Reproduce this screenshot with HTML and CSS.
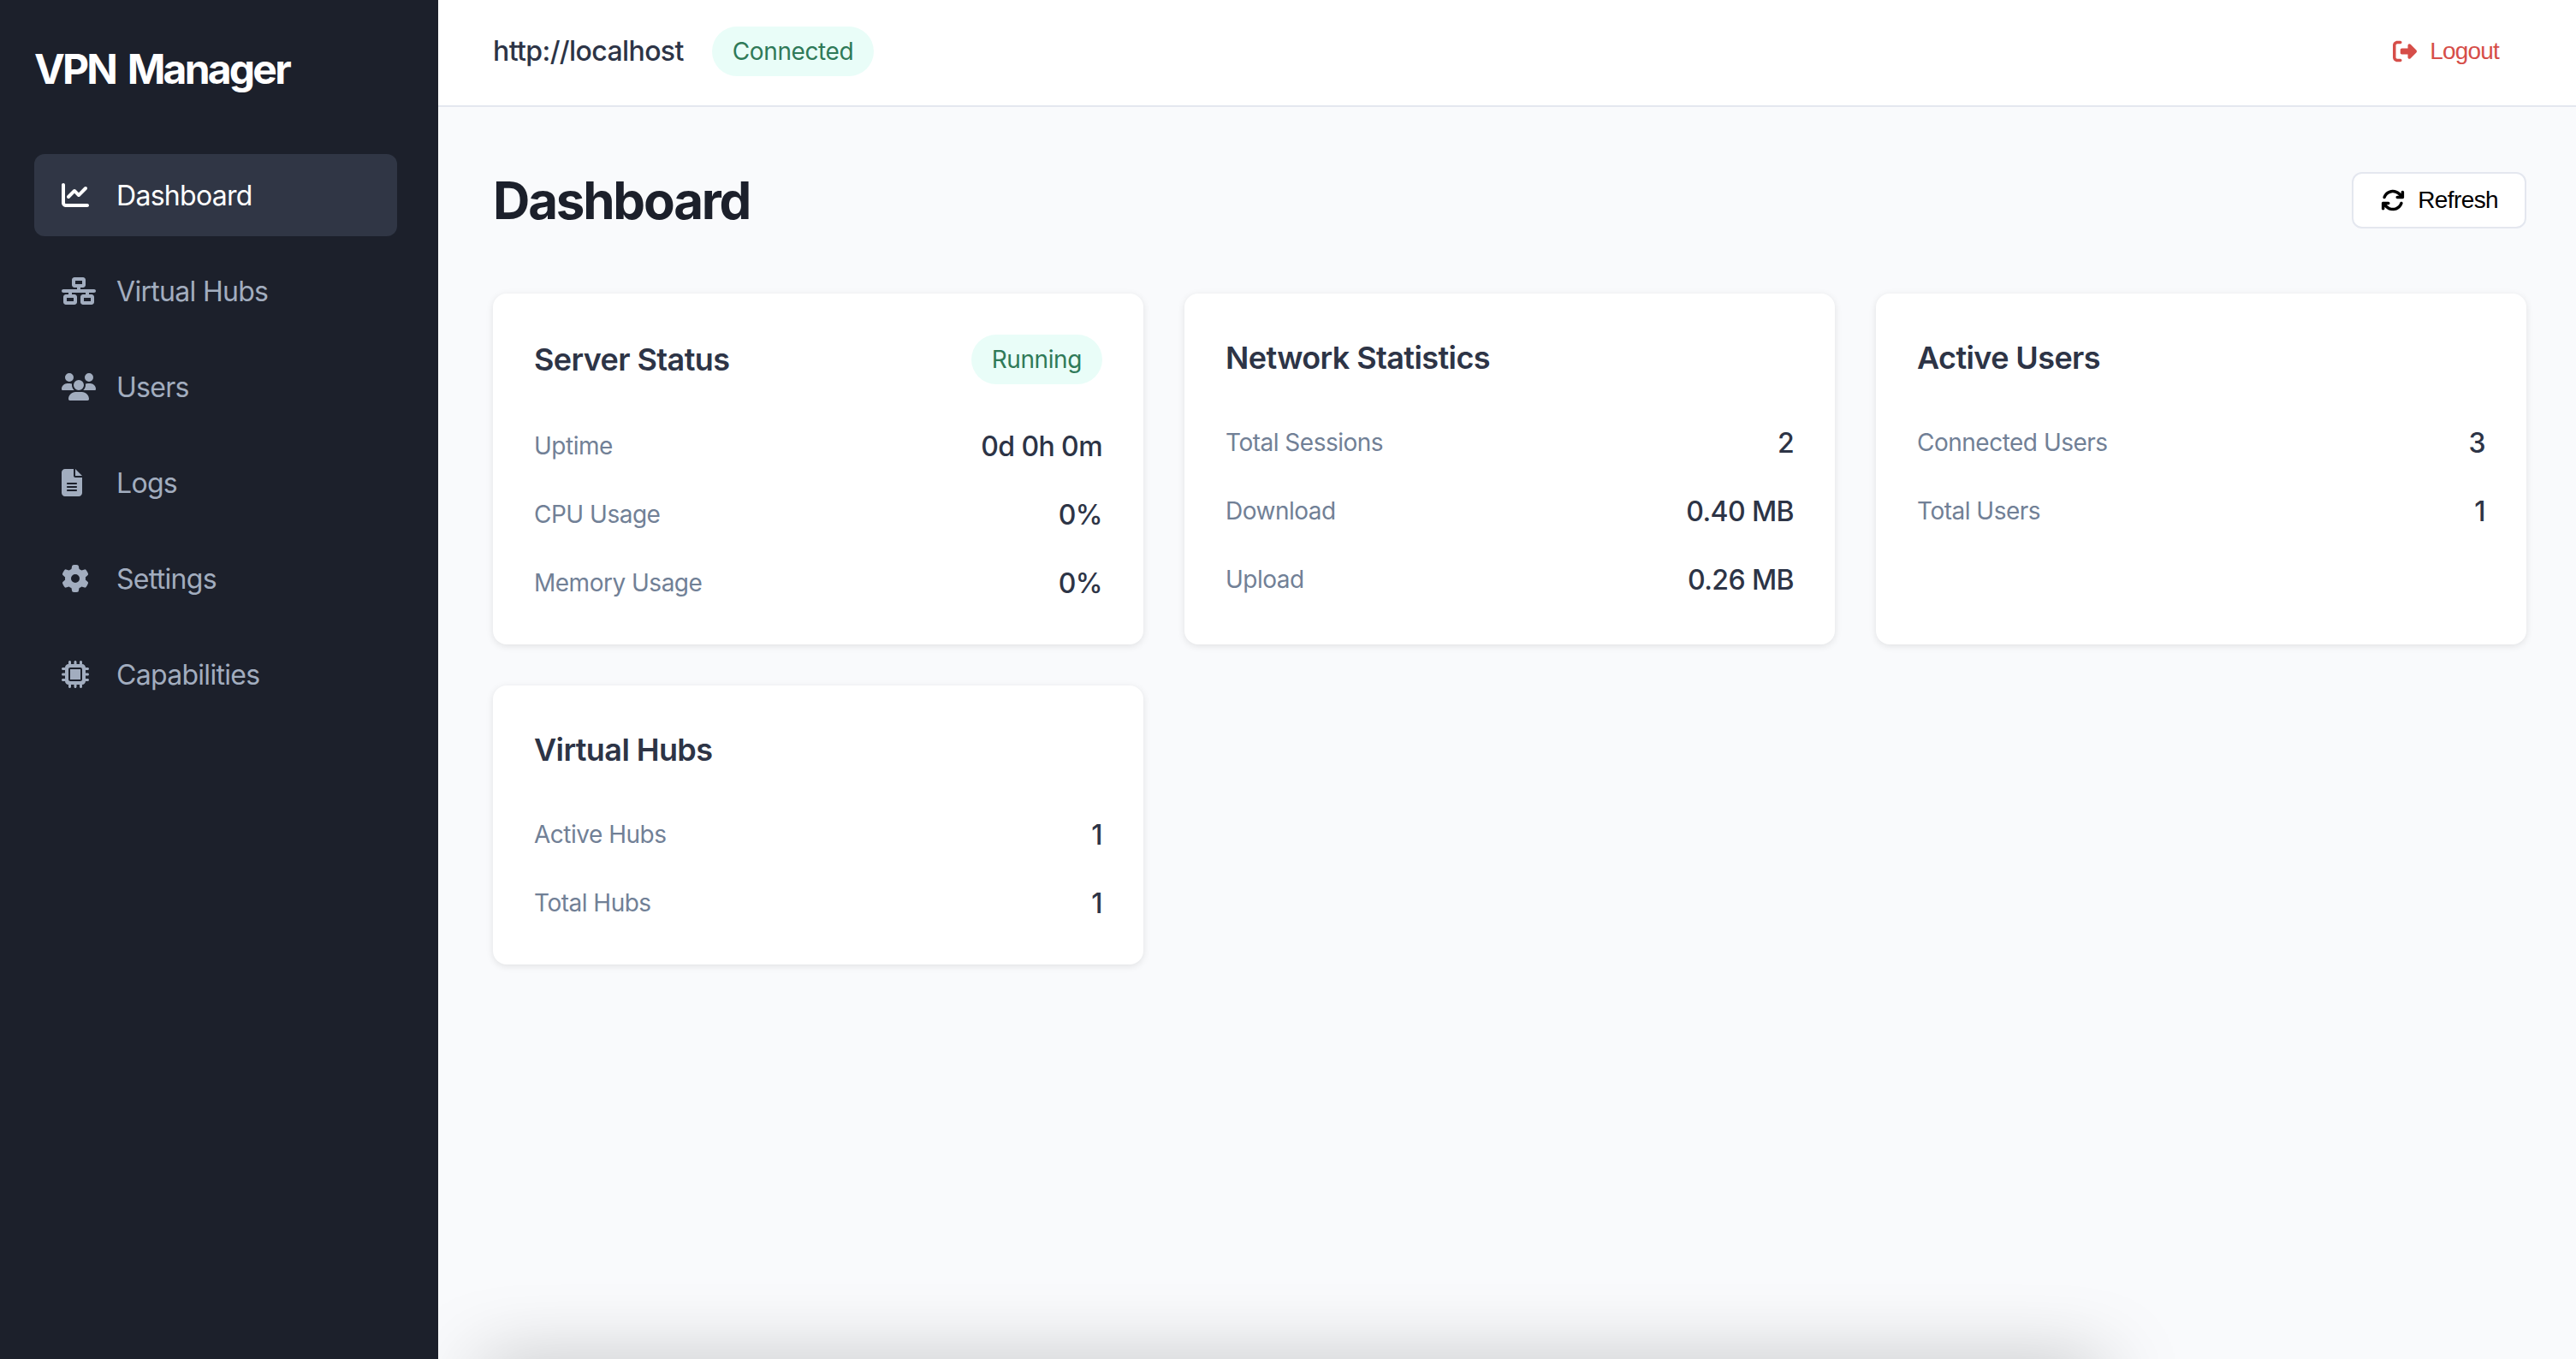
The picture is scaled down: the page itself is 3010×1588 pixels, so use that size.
FILE: index.html
```html
<!DOCTYPE html>
<html lang="en">
<head>
    <meta charset="utf-8">
    <title>VPN Manager</title>
    <link rel="stylesheet" href="styles.css">
</head>
<body>
    <aside class="sidebar">
        <h1 class="logo">VPN Manager</h1>
        <nav class="nav">
            <a class="nav-item active">
                <span class="nav-icon"><svg class="icon" width="32" height="32" viewBox="0 0 512 512"><path d="M64 64c0-17.7-14.3-32-32-32S0 46.3 0 64V400c0 44.2 35.8 80 80 80H480c17.7 0 32-14.3 32-32s-14.3-32-32-32H80c-8.8 0-16-7.2-16-16V64zm406.6 86.6c12.5-12.5 12.5-32.8 0-45.3s-32.8-12.5-45.3 0L320 210.7l-57.4-57.4c-12.5-12.5-32.8-12.5-45.3 0l-112 112c-12.5 12.5-12.5 32.8 0 45.3s32.8 12.5 45.3 0L240 221.3l57.4 57.4c12.5 12.5 32.8 12.5 45.3 0l128-128z"/></svg></span>
                <span class="nav-label">Dashboard</span>
            </a>
            <a class="nav-item">
                <span class="nav-icon"><svg class="icon" width="40" height="32" viewBox="0 0 640 512"><path d="M256 64H384v64H256V64zM240 0c-26.5 0-48 21.5-48 48v96c0 26.5 21.5 48 48 48h48v32H32c-17.7 0-32 14.3-32 32s14.3 32 32 32h96v32H80c-26.5 0-48 21.5-48 48v96c0 26.5 21.5 48 48 48H240c26.5 0 48-21.5 48-48V368c0-26.5-21.5-48-48-48H192V288H448v32H400c-26.5 0-48 21.5-48 48v96c0 26.5 21.5 48 48 48H560c26.5 0 48-21.5 48-48V368c0-26.5-21.5-48-48-48H512V288h96c17.7 0 32-14.3 32-32s-14.3-32-32-32H352V192h48c26.5 0 48-21.5 48-48V48c0-26.5-21.5-48-48-48H240zM96 448V384H224v64H96zm320-64H544v64H416V384z"/></svg></span>
                <span class="nav-label">Virtual Hubs</span>
            </a>
            <a class="nav-item">
                <span class="nav-icon"><svg class="icon" width="40" height="32" viewBox="0 0 640 512"><path d="M144 0a80 80 0 1 1 0 160A80 80 0 1 1 144 0zM512 0a80 80 0 1 1 0 160A80 80 0 1 1 512 0zM0 298.7C0 239.8 47.8 192 106.7 192h42.7c15.9 0 31 3.5 44.6 9.7c-1.3 7.2-1.9 14.7-1.9 22.3c0 38.2 16.8 72.5 43.3 96c-.2 0-.4 0-.7 0H21.3C9.6 320 0 310.4 0 298.7zM405.3 320c-.2 0-.4 0-.7 0c26.6-23.5 43.3-57.8 43.3-96c0-7.6-.7-15-1.9-22.3c13.6-6.3 28.7-9.7 44.6-9.7h42.7C592.2 192 640 239.8 640 298.7c0 11.8-9.6 21.3-21.3 21.3H405.3zM224 224a96 96 0 1 1 192 0 96 96 0 1 1 -192 0zM128 485.3C128 411.7 187.7 352 261.3 352H378.7C452.3 352 512 411.7 512 485.3c0 14.7-11.9 26.7-26.7 26.7H154.7c-14.7 0-26.7-11.9-26.7-26.7z"/></svg></span>
                <span class="nav-label">Users</span>
            </a>
            <a class="nav-item">
                <span class="nav-icon"><svg class="icon" width="24" height="32" viewBox="0 0 384 512"><path d="M64 0C28.7 0 0 28.7 0 64V448c0 35.3 28.7 64 64 64H320c35.3 0 64-28.7 64-64V160H256c-17.7 0-32-14.3-32-32V0H64zM256 0V128H384L256 0zM112 256H272c8.8 0 16 7.2 16 16s-7.2 16-16 16H112c-8.8 0-16-7.2-16-16s7.2-16 16-16zm0 64H272c8.8 0 16 7.2 16 16s-7.2 16-16 16H112c-8.8 0-16-7.2-16-16s7.2-16 16-16zm0 64H272c8.8 0 16 7.2 16 16s-7.2 16-16 16H112c-8.8 0-16-7.2-16-16s7.2-16 16-16z"/></svg></span>
                <span class="nav-label">Logs</span>
            </a>
            <a class="nav-item">
                <span class="nav-icon"><svg class="icon" width="32" height="32" viewBox="0 0 512 512"><path d="M495.9 166.6c3.2 8.7 .5 18.4-6.4 24.6l-43.3 39.4c1.1 8.3 1.7 16.8 1.7 25.4s-.6 17.1-1.7 25.4l43.3 39.4c6.9 6.2 9.6 15.9 6.4 24.6c-4.4 11.9-9.7 23.3-15.8 34.3l-4.7 8.1c-6.6 11-14 21.4-22.1 31.2c-5.9 7.2-15.7 9.6-24.5 6.8l-55.7-17.7c-13.4 10.3-28.2 18.9-44 25.4l-12.5 57.1c-2 9.1-9 16.3-18.2 17.8c-13.8 2.3-28 3.5-42.5 3.5s-28.7-1.2-42.5-3.5c-9.2-1.5-16.2-8.7-18.2-17.8l-12.5-57.1c-15.8-6.5-30.6-15.1-44-25.4L83.1 425.9c-8.8 2.8-18.6 .3-24.5-6.8c-8.1-9.8-15.5-20.2-22.1-31.2l-4.7-8.1c-6.1-11-11.4-22.4-15.8-34.3c-3.2-8.7-.5-18.4 6.4-24.6l43.3-39.4C64.6 273.1 64 264.6 64 256s.6-17.1 1.7-25.4L22.4 191.2c-6.9-6.2-9.6-15.9-6.4-24.6c4.4-11.9 9.7-23.3 15.8-34.3l4.7-8.1c6.6-11 14-21.4 22.1-31.2c5.9-7.2 15.7-9.6 24.5-6.8l55.7 17.7c13.4-10.3 28.2-18.9 44-25.4l12.5-57.1c2-9.1 9-16.3 18.2-17.8C227.3 1.2 241.5 0 256 0s28.7 1.2 42.5 3.5c9.2 1.5 16.2 8.7 18.2 17.8l12.5 57.1c15.8 6.5 30.6 15.1 44 25.4l55.7-17.7c8.8-2.8 18.6-.3 24.5 6.8c8.1 9.8 15.5 20.2 22.1 31.2l4.7 8.1c6.1 11 11.4 22.4 15.8 34.3zM256 336a80 80 0 1 0 0-160 80 80 0 1 0 0 160z"/></svg></span>
                <span class="nav-label">Settings</span>
            </a>
            <a class="nav-item">
                <span class="nav-icon"><svg class="icon" width="32" height="32" viewBox="0 0 512 512"><path d="M176 24c0-13.3-10.7-24-24-24s-24 10.7-24 24V64c-35.3 0-64 28.7-64 64H24c-13.3 0-24 10.7-24 24s10.7 24 24 24H64v56H24c-13.3 0-24 10.7-24 24s10.7 24 24 24H64v56H24c-13.3 0-24 10.7-24 24s10.7 24 24 24H64c0 35.3 28.7 64 64 64v40c0 13.3 10.7 24 24 24s24-10.7 24-24V448h56v40c0 13.3 10.7 24 24 24s24-10.7 24-24V448h56v40c0 13.3 10.7 24 24 24s24-10.7 24-24V448c35.3 0 64-28.7 64-64h40c13.3 0 24-10.7 24-24s-10.7-24-24-24H448V280h40c13.3 0 24-10.7 24-24s-10.7-24-24-24H448V176h40c13.3 0 24-10.7 24-24s-10.7-24-24-24H448c0-35.3-28.7-64-64-64V24c0-13.3-10.7-24-24-24s-24 10.7-24 24V64H280V24c0-13.3-10.7-24-24-24s-24 10.7-24 24V64H176V24zM160 128H352c17.7 0 32 14.3 32 32V352c0 17.7-14.3 32-32 32H160c-17.7 0-32-14.3-32-32V160c0-17.7 14.3-32 32-32zm192 32H160V352H352V160z"/></svg></span>
                <span class="nav-label">Capabilities</span>
            </a>
        </nav>
    </aside>

    <div class="page">
        <header class="topbar">
            <div class="server">
                <span class="server-url">http://localhost</span>
                <span class="badge">Connected</span>
            </div>
            <button class="logout">
                <svg class="icon" width="28" height="28" viewBox="0 0 512 512"><path d="M377.9 105.9L500.7 228.7c7.2 7.2 11.3 17.1 11.3 27.3s-4.1 20.1-11.3 27.3L377.9 406.1c-6.4 6.4-15 9.9-24 9.9c-18.7 0-33.9-15.2-33.9-33.9l0-62.1-128 0c-17.7 0-32-14.3-32-32l0-64c0-17.7 14.3-32 32-32l128 0 0-62.1c0-18.7 15.2-33.9 33.9-33.9c9 0 17.6 3.6 24 9.9zM160 96L96 96c-17.7 0-32 14.3-32 32l0 256c0 17.7 14.3 32 32 32l64 0c17.7 0 32 14.3 32 32s-14.3 32-32 32l-64 0c-53 0-96-43-96-96L0 128C0 75 43 32 96 32l64 0c17.7 0 32 14.3 32 32s-14.3 32-32 32z"/></svg>
                Logout
            </button>
        </header>

        <main class="content">
            <div class="content-head">
                <h2 class="page-title">Dashboard</h2>
                <button class="refresh">
                    <svg class="icon" width="28" height="28" viewBox="0 0 512 512"><path d="M105.1 202.6c7.7-21.8 20.2-42.3 37.8-59.8c62.5-62.5 163.8-62.5 226.3 0L386.3 160H352c-17.7 0-32 14.3-32 32s14.3 32 32 32H463.5c0 0 0 0 0 0h.4c17.7 0 32-14.3 32-32V80c0-17.7-14.3-32-32-32s-32 14.3-32 32v35.2L414.4 97.6c-87.5-87.5-229.3-87.5-316.8 0C73.2 122 55.6 150.7 44.8 181.4c-5.9 16.7 2.9 34.9 19.5 40.8s34.9-2.9 40.8-19.5zM39 289.3c-5 1.5-9.8 4.2-13.7 8.2c-4 4-6.7 8.8-8.1 14c-.3 1.2-.6 2.5-.8 3.8c-.3 1.7-.4 3.4-.4 5.1V432c0 17.7 14.3 32 32 32s32-14.3 32-32V396.9l17.6 17.5 0 0c87.5 87.4 229.3 87.4 316.7 0c24.4-24.4 42.1-53.1 52.9-83.7c5.9-16.7-2.9-34.9-19.5-40.8s-34.9 2.9-40.8 19.5c-7.7 21.8-20.2 42.3-37.8 59.8c-62.5 62.5-163.8 62.5-226.3 0l-.1-.1L125.6 352H160c17.7 0 32-14.3 32-32s-14.3-32-32-32H48.4c-1.6 0-3.2 .1-4.8 .3s-3.1 .5-4.6 1z"/></svg>
                    Refresh
                </button>
            </div>

            <div class="cards">
                <section class="card">
                    <div class="card-head">
                        <h3 class="card-title">Server Status</h3>
                        <span class="badge">Running</span>
                    </div>
                    <div class="stats">
                        <div class="stat"><span class="stat-label">Uptime</span><span class="stat-value">0d 0h 0m</span></div>
                        <div class="stat"><span class="stat-label">CPU Usage</span><span class="stat-value">0%</span></div>
                        <div class="stat"><span class="stat-label">Memory Usage</span><span class="stat-value">0%</span></div>
                    </div>
                </section>
                <section class="card">
                    <div class="card-head">
                        <h3 class="card-title">Network Statistics</h3>
                    </div>
                    <div class="stats">
                        <div class="stat"><span class="stat-label">Total Sessions</span><span class="stat-value">2</span></div>
                        <div class="stat"><span class="stat-label">Download</span><span class="stat-value">0.40 MB</span></div>
                        <div class="stat"><span class="stat-label">Upload</span><span class="stat-value">0.26 MB</span></div>
                    </div>
                </section>
                <section class="card">
                    <div class="card-head">
                        <h3 class="card-title">Active Users</h3>
                    </div>
                    <div class="stats">
                        <div class="stat"><span class="stat-label">Connected Users</span><span class="stat-value">3</span></div>
                        <div class="stat"><span class="stat-label">Total Users</span><span class="stat-value">1</span></div>
                    </div>
                </section>
                <section class="card">
                    <div class="card-head">
                        <h3 class="card-title">Virtual Hubs</h3>
                    </div>
                    <div class="stats">
                        <div class="stat"><span class="stat-label">Active Hubs</span><span class="stat-value">1</span></div>
                        <div class="stat"><span class="stat-label">Total Hubs</span><span class="stat-value">1</span></div>
                    </div>
                </section>
            </div>
        </main>

        <div class="bottom-shadow"></div>
    </div>
</body>
</html>
```

FILE: styles.css
```css
* {
    box-sizing: border-box;
}

body {
    margin: 0;
    height: 100vh;
    display: flex;
    overflow: hidden;
    font-family: "Inter", "Liberation Sans", sans-serif;
    line-height: 1.5;
    background-color: #f9fafc;
    color: #2d3446;
}

.icon {
    fill: currentColor;
    display: block;
    flex-shrink: 0;
}

/* sidebar */
.sidebar {
    width: 512px;
    flex-shrink: 0;
    padding: 45px 48px 0 40px;
    background-color: #1c202b;
}

.logo {
    margin: 0 0 63px;
    font-size: 48px;
    font-weight: 700;
    letter-spacing: -2.8px;
    word-spacing: 5px;
    color: #fff;
}

.nav {
    display: flex;
    flex-direction: column;
    gap: 16px;
}

.nav-item {
    display: flex;
    align-items: center;
    height: 96px;
    padding: 0 32px;
    border-radius: 12px;
    font-size: 32px;
    letter-spacing: -0.7px;
    color: #a2adbf;
}

.nav-item.active {
    background-color: #303645;
    color: #fff;
}

.nav-icon {
    width: 40px;
    margin-right: 24px;
}

.nav-label {
    padding-top: 2px;
}

/* top bar */
.page {
    flex: 1;
    position: relative;
    overflow: hidden;
}

.topbar {
    display: flex;
    justify-content: space-between;
    align-items: center;
    height: 125px;
    padding: 0 64px 3px;
    background-color: #fff;
    border-bottom: 2px solid #e4e7ef;
}

.server {
    display: flex;
    align-items: center;
    gap: 33px;
}

.server-url {
    font-size: 32px;
    font-weight: 500;
    letter-spacing: -0.6px;
}

.badge {
    padding: 8px 24px;
    border-radius: 32px;
    background-color: #e9fdf8;
    font-size: 28px;
    letter-spacing: -0.4px;
    color: #2f7a58;
}

.logout {
    display: flex;
    align-items: center;
    gap: 15px;
    padding: 8px 26px;
    border: none;
    background: none;
    font-family: "Liberation Sans", sans-serif;
    font-size: 28px;
    letter-spacing: -0.8px;
    color: #d64e49;
}

/* main content */
.content {
    padding: 64px 58px 0 64px;
}

.content-head {
    display: flex;
    justify-content: space-between;
    align-items: center;
    margin-bottom: 64px;
}

.page-title {
    margin: 0;
    font-size: 60px;
    font-weight: 650;
    letter-spacing: -2.2px;
    color: #1c202b;
}

.refresh {
    display: flex;
    align-items: center;
    gap: 15px;
    height: 66px;
    padding: 0 31px 0 32px;
    border: 2px solid #e4e7ef;
    border-radius: 12px;
    background-color: #fff;
    font-family: "Liberation Sans", sans-serif;
    font-size: 28px;
    letter-spacing: -0.6px;
    color: #000;
}

.cards {
    display: grid;
    grid-template-columns: repeat(3, 1fr);
    gap: 48px;
}

.card {
    padding: 48px;
    border-radius: 16px;
    background-color: #fff;
    box-shadow: 0 2px 8px rgba(0, 0, 0, 0.1);
}

.card-head {
    display: flex;
    justify-content: space-between;
    align-items: center;
    margin-bottom: 48px;
}

.card-title {
    margin: 0;
    font-size: 36px;
    font-weight: 600;
    letter-spacing: -0.6px;
}

.stats {
    display: flex;
    flex-direction: column;
    gap: 32px;
}

.stat {
    display: flex;
    justify-content: space-between;
    align-items: center;
}

.stat-label {
    font-size: 28px;
    letter-spacing: -0.5px;
    color: #718096;
}

.stat-value {
    padding-top: 2px;
    font-size: 32px;
    font-weight: 500;
    line-height: 46px;
    letter-spacing: -0.6px;
}

/* soft shadow rising from the bottom edge of the window */
.bottom-shadow {
    position: absolute;
    left: 50px;
    width: 1895px;
    top: 1600px;
    height: 40px;
    box-shadow: 0 0 90px rgba(0, 0, 0, 0.36);
}
```
